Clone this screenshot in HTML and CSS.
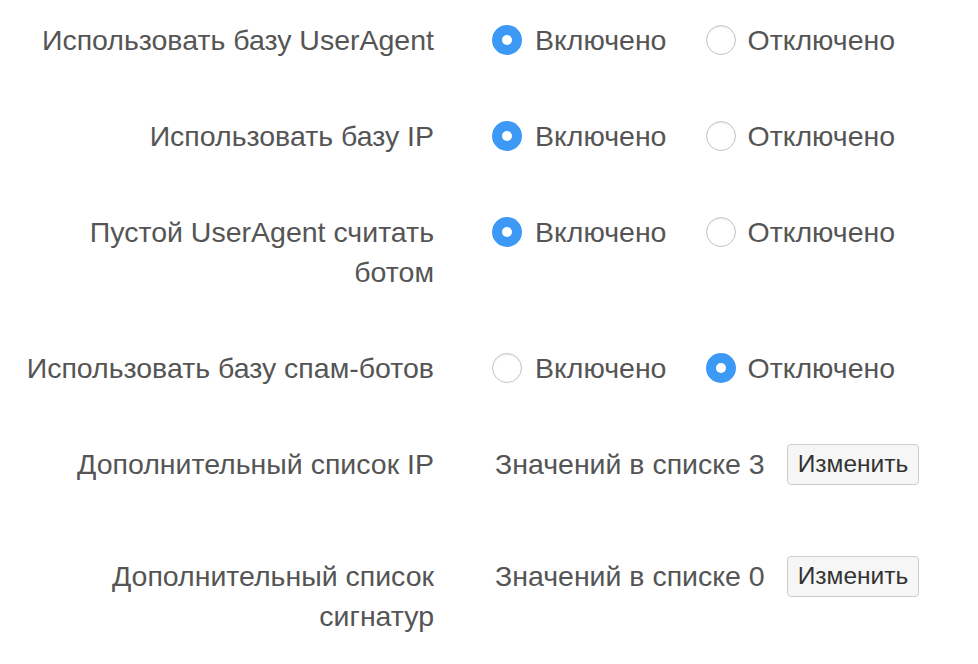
FILE: index.html
```html
<!DOCTYPE html>
<html lang="ru">

<head>
    <meta charset="UTF-8" />
    <title>Настройки</title>
    <link rel="stylesheet" href="styles.css">
</head>

<body>
    <form class="settings">
        <div class="row">
            <div class="label">Использовать базу UserAgent</div>
            <div class="control">
                <label class="option"><span class="radio checked"></span>Включено</label>
                <label class="option"><span class="radio"></span>Отключено</label>
            </div>
        </div>

        <div class="row">
            <div class="label">Использовать базу IP</div>
            <div class="control">
                <label class="option"><span class="radio checked"></span>Включено</label>
                <label class="option"><span class="radio"></span>Отключено</label>
            </div>
        </div>

        <div class="row">
            <div class="label">Пустой UserAgent считать ботом</div>
            <div class="control">
                <label class="option"><span class="radio checked"></span>Включено</label>
                <label class="option"><span class="radio"></span>Отключено</label>
            </div>
        </div>

        <div class="row">
            <div class="label">Использовать базу спам-ботов</div>
            <div class="control">
                <label class="option"><span class="radio"></span>Включено</label>
                <label class="option"><span class="radio checked"></span>Отключено</label>
            </div>
        </div>

        <div class="row row-list">
            <div class="label">Дополнительный список IP</div>
            <div class="control">
                <span class="count">Значений в списке 3</span>
                <button type="button" class="btn">Изменить</button>
            </div>
        </div>

        <div class="row">
            <div class="label">Дополнительный список сигнатур</div>
            <div class="control">
                <span class="count">Значений в списке 0</span>
                <button type="button" class="btn">Изменить</button>
            </div>
        </div>
    </form>
</body>

</html>
```

FILE: styles.css
```css
body {
    margin: 0;
    font-family: "Liberation Sans", Arial, sans-serif;
    font-size: 28.5px;
    color: #555;
    background: #fff;
}

.settings {
    padding-top: 20px;
}

.row {
    display: flex;
    align-items: flex-start;
    margin-bottom: 56px;
}

.row-list {
    margin-bottom: 72px;
}

.label {
    width: 434px;
    flex-shrink: 0;
    text-align: right;
    line-height: 40px;
    padding-left: 18px;
    box-sizing: border-box;
}

.control {
    margin-left: 58px;
    display: flex;
    align-items: center;
    height: 40px;
    white-space: nowrap;
}

.option {
    display: flex;
    align-items: center;
    margin-right: 40px;
}

.option + .option .radio {
    margin-right: 11px;
}

.radio {
    width: 30px;
    height: 30px;
    box-sizing: border-box;
    border-radius: 50%;
    border: 1px solid #c4c4c4;
    background: #fff;
    box-shadow: inset 0 1px 2px rgba(0, 0, 0, 0.08);
    margin-right: 13px;
    position: relative;
}

.radio.checked {
    border: none;
    box-shadow: none;
    background: #3d99f6;
}

.radio.checked::after {
    content: "";
    position: absolute;
    left: 10px;
    top: 10px;
    width: 10px;
    height: 10px;
    border-radius: 50%;
    background: #fff;
}

.count {
    margin-left: 3px;
}

.btn {
    margin-left: 22px;
    height: 41px;
    padding: 0 10px;
    font-family: inherit;
    font-size: 24.5px;
    color: #333;
    background: #f6f6f6;
    border: 1px solid #ccc;
    border-radius: 4px;
}
```
